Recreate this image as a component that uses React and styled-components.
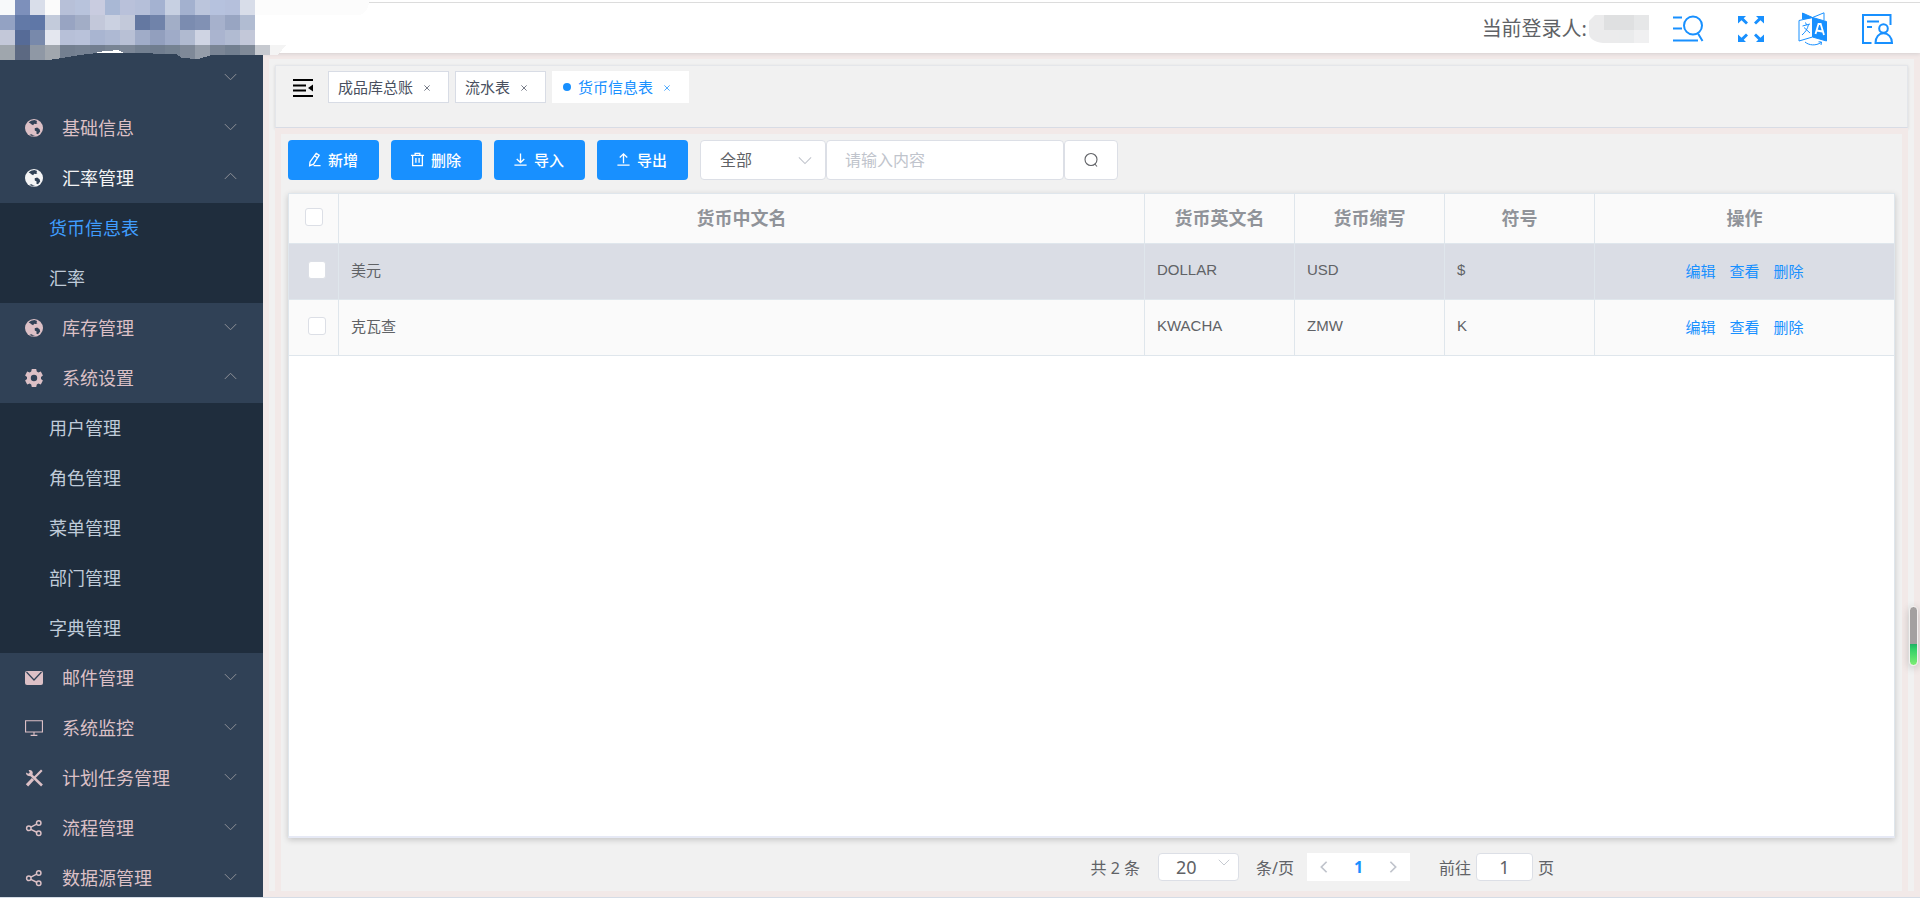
import React from 'react';
import styled, { createGlobalStyle, css } from 'styled-components';

const GlobalStyle = createGlobalStyle`
  * {
    box-sizing: border-box;
  }

  body {
    margin: 0;
    color: #606266;
    font-family: "Noto Sans", "Noto Sans CJK SC", sans-serif;
    font-size: 15px;
    overflow: hidden;
  }

  button, input, select {
    font-family: inherit;
    color: inherit;
  }

  button {
    cursor: pointer;
  }

  svg {
    display: block;
  }
`;

const Stroke = ({
  size = 16, width = 1.2, children, className,
}) => (
  <svg
    className={className}
    width={size}
    height={size}
    viewBox="0 0 16 16"
    fill="none"
    stroke="currentColor"
    strokeWidth={width}
    aria-hidden="true"
  >
    {children}
  </svg>
);

const Layout = styled.div`
  display: flex;
  height: 100vh;
  border-bottom: 1px solid #d5dce6;
  overflow: hidden;
`;

const Sidebar = styled.aside`
  position: relative;
  flex: 0 0 263px;
  padding-top: 53px;
  background-color: #304156;
  z-index: 2;
`;

const SideNav = styled.nav`
  height: 100%;
  overflow: hidden;
`;

const LogoArt = styled.svg`
  position: absolute;
  top: 0;
  left: 0;
`;

const MenuTitle = styled.button`
  display: flex;
  align-items: center;
  width: 100%;
  height: 50px;
  padding: 0 26px 0 25px;
  border: 0;
  background: none;
  color: ${props => (props.$open ? '#f4f4f5' : '#dcc0c6')};
  font-size: 18px;
  line-height: 50px;
`;

const MenuIcon = styled.span`
  width: 18px;
  margin-right: 19px;
`;

const MenuArrow = styled(Stroke)`
  margin: 0 0 4px auto;
  color: #909399;
  transform: ${props => (props.$up ? 'rotate(180deg)' : 'none')};
`;

const SubMenu = styled.div`
  background-color: #1f2d3d;
`;

const SubItem = styled.a`
  display: block;
  height: 50px;
  padding-left: 49px;
  color: ${props => (props.$active ? '#409eff' : '#bfcbd9')};
  font-size: 18px;
  line-height: 50px;
  text-decoration: none;
`;

const Main = styled.main`
  display: flex;
  flex: 1;
  flex-direction: column;
  min-width: 0;
`;

const Header = styled.header`
  position: relative;
  display: flex;
  flex: 0 0 53px;
  align-items: center;
  justify-content: flex-end;
  padding: 5px 26px 0 0;
  background-color: #fff;
  box-shadow: 0 1px 4px rgba(0, 21, 41, 0.12);
  z-index: 1;

  &::before {
    content: '';
    position: absolute;
    top: 2px;
    left: 106px;
    right: 0;
    height: 1px;
    background-color: #dcdcdc;
  }
`;

const LoginUser = styled.span`
  margin-right: 2px;
  font-size: 20px;
  line-height: 28px;
`;

const UserName = styled.svg`
  margin-right: 23px;
`;

const HeaderIcons = styled.div`
  display: flex;
  align-items: center;
  gap: 33px;
`;

const IconButton = styled.button`
  padding: 0;
  border: 0;
  background: none;
  color: #1890ff;
`;

const Frame = styled.div`
  flex: 1;
  display: flex;
  min-height: 0;
  border: 6px solid #f2e9e8;
`;

const Page = styled.div`
  display: flex;
  flex: 1;
  flex-direction: column;
  min-width: 0;
  padding: 6px 6px 0;
  background-color: #f1f1f1;
`;

const TabsBar = styled.div`
  display: flex;
  flex: 0 0 63px;
  align-items: flex-start;
  gap: 6px;
  padding: 5px 17px;
  border: 1px solid #e4e6ea;
  border-bottom-color: #d8dce5;
  box-shadow: 0 1px 3px rgba(0, 0, 0, 0.12);
`;

const Hamburger = styled(IconButton)`
  margin: 8px 9px 0 0;
`;

const Tab = styled.div`
  display: flex;
  align-items: center;
  height: 32px;
  padding: 0 11px 1px 9px;
  border: 1px solid ${props => (props.$active ? '#fff' : '#d8dce5')};
  background-color: #fff;
  color: ${props => (props.$active ? '#1890ff' : '#495060')};
  font-size: 15px;

  ${props => props.$active && css`
    &::before {
      content: '';
      width: 8px;
      height: 8px;
      margin: 0 7px 0 1px;
      border-radius: 50%;
      background-color: #1890ff;
    }
  `}

  a {
    color: inherit;
    text-decoration: none;
  }
`;

const TabClose = styled.button`
  display: flex;
  align-items: center;
  justify-content: center;
  width: 20px;
  height: 20px;
  margin-left: 4px;
  padding: 3px 0 0;
  border: 0;
  background: none;
`;

const Content = styled.section`
  display: flex;
  flex: 1;
  flex-direction: column;
  min-height: 0;
  padding: 6px 7px 0;
  border: 6px solid #f2e9e8;
  border-bottom: 0;
`;

const Toolbar = styled.div`
  display: flex;
  margin-bottom: 13px;
`;

const ActionButton = styled.button`
  display: flex;
  align-items: center;
  justify-content: center;
  gap: 6px;
  width: 91px;
  height: 40px;
  margin-right: 12px;
  padding: 0 2px 2px 0;
  border: 0;
  border-radius: 4px;
  background-color: #1890ff;
  color: #fff;
  font-size: 15px;
  font-weight: 500;
`;

const SelectBox = styled.div`
  position: relative;
  width: ${props => props.$width};

  svg {
    position: absolute;
    top: ${props => props.$arrowTop};
    right: ${props => props.$arrowRight};
    color: #c0c4cc;
    pointer-events: none;
  }
`;

const field = css`
  width: 100%;
  border: 1px solid #dcdfe6;
  border-radius: 4px;
  background-color: #fff;
  outline: none;
`;

const FilterSelect = styled.select`
  ${field}
  height: 40px;
  padding: 0 19px;
  appearance: none;
  font-size: 16px;
`;

const FilterInput = styled.input`
  ${field}
  width: 238px;
  height: 40px;
  padding: 0 18px;
  font-size: 16px;

  &::placeholder {
    color: #c0c4cc;
  }
`;

const SearchButton = styled.button`
  ${field}
  display: flex;
  align-items: center;
  justify-content: center;
  width: 54px;
  height: 40px;
  padding: 0;
`;

const TableCard = styled.div`
  flex: 1;
  border: 1px solid #dfe6ec;
  border-bottom: 2px solid #e6e9f5;
  background-color: #fff;
  box-shadow: 0 2px 6px rgba(0, 0, 0, 0.18);
`;

const Table = styled.table`
  width: 100%;
  border-collapse: separate;
  border-spacing: 0;
  table-layout: fixed;
  font-family: "Liberation Sans", "Noto Sans CJK SC", sans-serif;
`;

const Th = styled.th`
  width: ${props => props.$width || 'auto'};
  height: 50px;
  padding: 0 0 3px;
  border-right: 1px solid #dfe6ec;
  border-bottom: 1px solid #dfe6ec;
  background-color: #fafafa;
  color: #909399;
  font-size: 18px;
  font-weight: 700;

  &:last-child {
    border-right: 0;
  }
`;

const Tr = styled.tr`
  background-color: ${props => (props.$current ? '#dadde5' : '#fafafa')};
`;

const Td = styled.td`
  height: 56px;
  padding: 0 12px 5px;
  border-right: 1px solid #dfe6ec;
  border-bottom: 1px solid #dfe6ec;
  font-size: 15px;

  &:last-child {
    padding: 0 0 2px;
    border-right: 0;
  }
`;

const SelectTd = styled(Td)`
  padding: 0 0 4px 19px;
`;

const Checkbox = styled.input`
  display: block;
  width: 18px;
  height: 18px;
  margin: ${props => (props.$center ? '0 auto' : 0)};
  border: 1px solid #dcdfe6;
  border-radius: 3px;
  background-color: #fff;
  appearance: none;
`;

const RowActions = styled.div`
  display: flex;
  justify-content: center;
  gap: 14px;

  a {
    color: #1890ff;
    text-decoration: none;
  }
`;

const Pagination = styled.div`
  display: flex;
  flex: 0 0 53px;
  align-items: center;
  justify-content: flex-end;
  padding: 4px 341px 0 0;
  font-size: 16px;
`;

const Total = styled.span`
  margin-right: 18px;
`;

const SizeSelect = styled.select`
  ${field}
  display: block;
  height: 28px;
  padding: 0 17px;
  appearance: none;
  font-size: 18px;
  line-height: 26px;
`;

const SizeLabel = styled.label`
  margin-left: 17px;
`;

const Pager = styled.div`
  display: flex;
  width: 103px;
  height: 28px;
  margin: 0 29px 0 13px;
  background-color: #fff;
`;

const PagerButton = styled.button`
  display: flex;
  flex: 1;
  align-items: center;
  justify-content: center;
  padding: 0;
  border: 0;
  background: none;
  color: ${props => (props.$current ? '#1890ff' : '#c0c4cc')};
  font-size: 16px;
  font-weight: 700;
`;

const JumpLabel = styled.label`
  display: flex;
  align-items: center;
  gap: 5px;
`;

const JumpInput = styled.input`
  ${field}
  width: 57px;
  height: 28px;
  padding: 0;
  font-size: 18px;
  text-align: center;
`;

const ScrollMark = styled.div`
  position: absolute;
  right: 2px;
  bottom: 232px;
  width: 9px;
  height: 60px;
  border: 1px solid #f3f0ef;
  border-radius: 5px;
  background: linear-gradient(#a3a0a0 0 37px, #1fb264 37px, #32cf68 42px, #7dee74);
  box-shadow: 0 2px 8px rgba(0, 0, 0, 0.2);
  z-index: 3;
`;

const GlobeIcon = () => (
  <svg width="18" height="18" viewBox="0 0 18 18" aria-hidden="true">
    <circle cx="9" cy="9" r="9" fill="currentColor" />
    <g fill="#304156">
      <path d="M3.6 3.6 6 1.8 9.4 1.1 12.2 1.9 11.4 3.2 12.4 4.2 10.8 5 9.2 4.7 8.1 6.2 6.3 5.2 5.2 4.3Z" />
      <path d="M9.7 9.2 12.2 8.6 14.6 10.2 15.2 12.4 13 15.2 11.4 14.8 11.6 12.6 9.8 11.4Z" />
      <path d="M4.4 16 6.2 15.1 8.8 16.6 11 17.3 7.6 17.6Z" opacity=".8" />
    </g>
  </svg>
);

const GearIcon = () => (
  <svg width="18" height="18" viewBox="0 0 18 18" fill="currentColor" aria-hidden="true">
    <path
      fillRule="evenodd"
      d="M6.8 0h4.4l.6 2.5 1.5.9 2.5-.8 2.1 3.8-1.9 1.7v1.8l1.9 1.7-2.1 3.8-2.5-.8-1.5.9-.6 2.5H6.8l-.6-2.5-1.5-.9-2.5.8L.1 11.6 2 9.9V8.1L.1 6.4 2.2 2.6l2.5.8 1.5-.9ZM9 5.8a3.2 3.2 0 1 0 0 6.4 3.2 3.2 0 0 0 0-6.4Z"
    />
  </svg>
);

const MailIcon = () => (
  <svg width="18" height="18" viewBox="0 0 18 18" fill="currentColor" aria-hidden="true">
    <rect y="2" width="18" height="14" rx="2" />
    <path d="M1.5 3 9 11 16.5 3" fill="none" stroke="#304156" strokeWidth="1.2" />
  </svg>
);

const MonitorIcon = () => (
  <Stroke size={18} width={1}>
    <path d="M.5 1.5h15v10H.5ZM8 11.500V14M5 14.500h6" />
  </Stroke>
);

const ToolsIcon = () => (
  <svg width="18" height="18" viewBox="0 0 18 18" aria-hidden="true">
    <g fill="none" stroke="currentColor">
      <path d="M5.4 5.4 17 16.500" strokeWidth="2.6" />
      <path d="M16.8 1.200 9.6 8.600" strokeWidth="2.200" />
      <path d="M8 10 2 16.400" strokeWidth="3.200" />
    </g>
    <path d="M1 3.400 3.400 4.800 4.800 3.600 3.600 1.200C5.200.4 7.800 1.400 7.800 3.800 7.800 6.400 5.800 7.600 3.800 7 1.800 6.600.8 4.800 1 3.400Z" fill="currentColor" />
  </svg>
);

const ShareIcon = () => (
  <Stroke size={18} width={1.3}>
    <circle cx="3.4" cy="8.3" r="2" />
    <circle cx="12.2" cy="3.5" r="2" />
    <circle cx="12.2" cy="12.700" r="2" />
    <path d="M5.2 7.3 10.400 4.500M5.200 9.200 10.400 11.800" />
  </Stroke>
);

const Chevron = () => <path d="M1 5 8 12 15 5" />;

const EditIcon = () => (
  <Stroke size={15} width={1.4}>
    <path d="M9.8 1.5 13 3.4 7 13 2.8 14.6 3.2 10.600ZM8.200 4.200l3 1.900M7 14.500h7.500" />
  </Stroke>
);

const TrashIcon = () => (
  <Stroke size={15} width={1.4}>
    <path d="M1 3.500h14M5.500 3.500v-2h5v2M2.800 3.500v11h10.400v-11M6.300 6.500v5M9.700 6.500v5" />
  </Stroke>
);

const ImportIcon = () => (
  <Stroke size={15} width={1.4}>
    <path d="M8 1.500v9.500M4 7.500 8 11.200 12 7.500M1.500 14h13" />
  </Stroke>
);

const ExportIcon = () => (
  <Stroke size={15} width={1.4}>
    <path d="M8 12V2M4 5.800 8 2 12 5.800M1.500 14h13" />
  </Stroke>
);

const SearchIcon = () => (
  <Stroke size={16} width={1.1}>
    <circle cx="8" cy="7.500" r="6" />
    <path d="M11.800 12 14 14.500" />
  </Stroke>
);

const HamburgerIcon = () => (
  <svg width="20" height="18" viewBox="0 0 20 18" aria-hidden="true">
    <path d="M0 1h20M0 6.500h13M0 11.500h13M0 17h20" fill="none" stroke="#000" strokeWidth="1.800" />
    <path d="M15 9 20 5.500v7Z" />
  </svg>
);

const HeaderSearchIcon = () => (
  <svg width="32" height="30" viewBox="0 0 32 30" fill="none" stroke="currentColor" strokeWidth="2" aria-hidden="true">
    <path d="M1 3.500h9M1 14.500h9M1 26.500h25M26 19.500 30.500 27" />
    <circle cx="21" cy="11.500" r="9" />
  </svg>
);

const FullscreenIcon = () => (
  <svg width="28" height="30" viewBox="0 0 28 30" fill="currentColor" aria-hidden="true">
    <path d="M1 2h8L6.700 4.300l4.300 4.300-2 2-4.500-4.400L1 9.500ZM27 2h-8l2.300 2.300L17 8.600l2 2 4.500-4.400L27 9.500ZM1 28h8l-2.300-2.300 4.300-4.300-2-2-4.500 4.400L1 20.500ZM27 28h-8l2.300-2.300-4.300-4.300 2-2 4.500 4.400L27 20.500Z" />
  </svg>
);

const TranslateIcon = () => (
  <svg width="30" height="34" viewBox="0 0 30 34" fill="none" stroke="currentColor" aria-hidden="true">
    <path d="M4.500 7V1L14.500 5.500Z" fill="currentColor" />
    <path d="M14.500 5.500 26 .8V8M1 8.500 14.500 5.500V25L1 29Z" />
    <path d="M14.500 5.500 28.500 9.500V29L14.500 25Z" fill="currentColor" />
    <path d="M4.500 14 12 12M7.500 10.500 8.500 13M10.500 12.500C9.500 17 7.500 20 4 23M6 15.500 12 21" />
    <path d="M17.500 22 20.500 12h2.200L26 23M18.500 18.500l6 1" stroke="#fff" strokeWidth="1.800" />
    <path d="M7 30C11 33.500 18 34 23 30.500M20.500 29.800 23.500 30 23 33" />
  </svg>
);

const ProfileIcon = () => (
  <svg width="33" height="32" viewBox="0 0 33 32" fill="none" stroke="currentColor" strokeWidth="2" aria-hidden="true">
    <path d="M10.500 30H2V2h27.500v10M6 8.500h12M6 14h5" />
    <circle cx="22.500" cy="15.500" r="4.300" />
    <path d="M14.500 30C14.500 24 18 20.300 22.500 20.300S31 24 31 30Z" />
  </svg>
);

const tiles = [
  ['#f7f9fa', '#7d90bb', '#d9deea', '#fbfbfb', '#b7c0d8', '#b8c3dc', '#c9cce0', '#a9b8d5', '#b9c1da', '#b5bfd9', '#a4b2d1', '#c7d0e2', '#a3b1cf', '#bbc5dc', '#b6c2de', '#b5c0dc', '#d8dde9'],
  ['#93a2c3', '#6279a7', '#5f77a7', '#c3cbdb', '#98a4c2', '#a2adc6', '#c3c8da', '#cbd1e1', '#c3c9da', '#6478a1', '#7083aa', '#a2aec7', '#7b8cb0', '#8191b4', '#a6b1cc', '#98a5c2', '#b1bcd2'],
  ['#c3c8d9', '#566b97', '#7889ab', '#e4e7ef', '#b7c0d8', '#b9c2da', '#a9b5d1', '#aeb9d3', '#b8c0d5', '#a0acc8', '#929fbe', '#9fabc8', '#b0bad0', '#cfd4e3', '#aab4cf', '#b1bbd2', '#c3c8d9'],
  ['#9fa6ad', '#5c6982', '#8f98a5', '#a1a7ae', '#737f90', '#768293', '#727e90', '#788494', '#7c8797', '#738091', '#707d8f', '#758292', '#7f8998', '#959da9', '#7a8595', '#727f90', '#808a98', '#c7cad0'],
];

const Logo = () => (
  <LogoArt width="370" height="60" viewBox="0 0 370 60" shapeRendering="crispEdges" role="img" aria-label="logo">
    <path d="M0 0H263V53H0Z" fill="#fff" />
    <path d="M255 0H370Q367 15 358 15H255Z" fill="#fcfcfc" />
    <path d="M270 45H286L278 55H270Z" fill="#f4f4f4" />
    {tiles.map((row, y) => row.map((fill, x) => (
      <rect key={`${y}-${x}`} x={x * 15} y={y * 15} width="15" height={x === 17 ? 10 : 15} fill={fill} />
    )))}
    <path d="M49 60 62 58 80 55 97 53 130 53 176 54 182 58 198 59 212 55 263 55V60Z" fill="#304156" />
    <path d="M97 52 118 50 124 53H97Z" fill="#fff" />
  </LogoArt>
);

const menu = [
  { label: '', icon: null },
  { label: '基础信息', icon: GlobeIcon },
  {
    label: '汇率管理', icon: GlobeIcon, open: true, highlight: true, items: ['货币信息表', '汇率'],
  },
  { label: '库存管理', icon: GlobeIcon },
  {
    label: '系统设置', icon: GearIcon, open: true, items: ['用户管理', '角色管理', '菜单管理', '部门管理', '字典管理'],
  },
  { label: '邮件管理', icon: MailIcon },
  { label: '系统监控', icon: MonitorIcon },
  { label: '计划任务管理', icon: ToolsIcon },
  { label: '流程管理', icon: ShareIcon },
  { label: '数据源管理', icon: ShareIcon },
];

const tabs = ['成品库总账', '流水表', '货币信息表'];

const actions = [
  { label: '新增', icon: EditIcon },
  { label: '删除', icon: TrashIcon },
  { label: '导入', icon: ImportIcon },
  { label: '导出', icon: ExportIcon },
];

const rows = [
  {
    name: '美元', english: 'DOLLAR', code: 'USD', symbol: '$',
  },
  {
    name: '克瓦查', english: 'KWACHA', code: 'ZMW', symbol: 'K',
  },
];

const SideMenu = ({ active }) => (
  <Sidebar>
    <SideNav>
      {menu.map(({
        label, icon: Icon, open, highlight, items,
      }) => (
        <React.Fragment key={label}>
          <MenuTitle type="button" $open={highlight} aria-expanded={!!open}>
            <MenuIcon>{Icon && <Icon />}</MenuIcon>
            {label}
            <MenuArrow size={13} $up={open}>
              <Chevron />
            </MenuArrow>
          </MenuTitle>
          {items && (
            <SubMenu>
              {items.map(item => (
                <SubItem key={item} href="#" $active={item === active}>{item}</SubItem>
              ))}
            </SubMenu>
          )}
        </React.Fragment>
      ))}
    </SideNav>
    <Logo />
  </Sidebar>
);

const TopBar = () => (
  <Header>
    <LoginUser>当前登录人:</LoginUser>
    <UserName width="60" height="28" viewBox="0 0 60 28" role="img" aria-label="user">
      <path d="M6 0H60V28H14Q0 26 0 18V6Z" fill="#ebebec" />
      <path d="M15 0H45V15H15Z" fill="#dfe0e1" />
      <path d="M45 0H60V15H45Z" fill="#e6e7e8" />
      <path d="M30 15H45V28H30Z" fill="#eaebec" />
      <path d="M45 15H60V28H45Z" fill="#f0f0f1" />
    </UserName>
    <HeaderIcons>
      <IconButton type="button" aria-label="搜索"><HeaderSearchIcon /></IconButton>
      <IconButton type="button" aria-label="全屏"><FullscreenIcon /></IconButton>
      <IconButton type="button" aria-label="语言"><TranslateIcon /></IconButton>
      <IconButton type="button" aria-label="个人中心"><ProfileIcon /></IconButton>
    </HeaderIcons>
  </Header>
);

const CurrencyTable = () => (
  <TableCard>
    <Table>
      <thead>
        <tr>
          <Th $width="50px"><Checkbox type="checkbox" aria-label="全选" $center /></Th>
          <Th>货币中文名</Th>
          <Th $width="150px">货币英文名</Th>
          <Th $width="150px">货币缩写</Th>
          <Th $width="150px">符号</Th>
          <Th $width="299px">操作</Th>
        </tr>
      </thead>
      <tbody>
        {rows.map((row, index) => (
          <Tr key={row.code} $current={index === 0}>
            <SelectTd><Checkbox type="checkbox" aria-label={row.name} /></SelectTd>
            <Td>{row.name}</Td>
            <Td>{row.english}</Td>
            <Td>{row.code}</Td>
            <Td>{row.symbol}</Td>
            <Td>
              <RowActions>
                <a href="#">编辑</a>
                <a href="#">查看</a>
                <a href="#">删除</a>
              </RowActions>
            </Td>
          </Tr>
        ))}
      </tbody>
    </Table>
  </TableCard>
);

const App = () => {
  const current = '货币信息表';

  return (
    <>
      <GlobalStyle />
      <Layout>
        <SideMenu active={current} />
        <Main>
          <TopBar />
          <Frame>
            <Page>
              <TabsBar>
                <Hamburger type="button" aria-label="收起菜单"><HamburgerIcon /></Hamburger>
                {tabs.map(tab => (
                  <Tab key={tab} $active={tab === current}>
                    <a href="#">{tab}</a>
                    <TabClose type="button" aria-label={`关闭 ${tab}`}>
                      <Stroke size={6} width={2}><path d="M1 1 15 15M15 1 1 15" /></Stroke>
                    </TabClose>
                  </Tab>
                ))}
              </TabsBar>
              <Content>
                <Toolbar>
                  {actions.map(({ label, icon: Icon }) => (
                    <ActionButton key={label} type="button">
                      <Icon />
                      {label}
                    </ActionButton>
                  ))}
                  <SelectBox $width="126px" $arrowTop="13px" $arrowRight="14px">
                    <FilterSelect aria-label="筛选字段">
                      <option>全部</option>
                    </FilterSelect>
                    <Stroke size={14}><Chevron /></Stroke>
                  </SelectBox>
                  <FilterInput type="text" placeholder="请输入内容" aria-label="搜索内容" />
                  <SearchButton type="button" aria-label="查询"><SearchIcon /></SearchButton>
                </Toolbar>
                <CurrencyTable />
                <Pagination>
                  <Total>共 2 条</Total>
                  <SelectBox $width="81px" $arrowTop="3px" $arrowRight="9px">
                    <SizeSelect id="page-size">
                      <option>20</option>
                    </SizeSelect>
                    <Stroke size={12}><Chevron /></Stroke>
                  </SelectBox>
                  <SizeLabel htmlFor="page-size">条/页</SizeLabel>
                  <Pager>
                    <PagerButton type="button" aria-label="上一页">
                      <Stroke size={14} width={2}><path d="M11 2 5 8 11 14" /></Stroke>
                    </PagerButton>
                    <PagerButton type="button" $current>1</PagerButton>
                    <PagerButton type="button" aria-label="下一页">
                      <Stroke size={14} width={2}><path d="M5 2 11 8 5 14" /></Stroke>
                    </PagerButton>
                  </Pager>
                  <JumpLabel>
                    前往
                    <JumpInput type="text" defaultValue="1" />
                    页
                  </JumpLabel>
                </Pagination>
              </Content>
            </Page>
          </Frame>
        </Main>
      </Layout>
      <ScrollMark />
    </>
  );
};

export default App;
